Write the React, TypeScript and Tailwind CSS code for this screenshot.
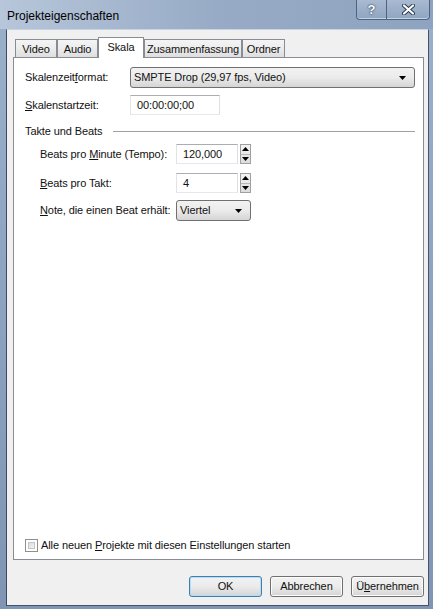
import React from 'react';

const tabs = [
  { label: 'Video', w: 'w-[42px]' },
  { label: 'Audio', w: 'w-[41px]' },
  { label: 'Skala', w: 'w-[46px]', active: true },
  { label: 'Zusammenfassung', w: 'w-[98px]' },
  { label: 'Ordner', w: 'w-[43px]' },
];

function Caret() {
  return (
    <svg width="7" height="4" viewBox="0 0 7 4" className="shrink-0">
      <path d="M0 0h7L3.5 4z" fill="#000" />
    </svg>
  );
}

function Combo({ text, className }: { text: string; className: string }) {
  return (
    <div
      className={`flex items-center justify-between h-[21px] pl-[3px] pr-[8px] rounded-[3px] border border-[#707070] bg-gradient-to-b from-[#f2f2f2] via-[#ebebeb] to-[#d5d5d5] ${className}`}
    >
      <span>{text}</span>
      <Caret />
    </div>
  );
}

function Spinner() {
  return (
    <div className="ml-[2px] flex flex-col w-[11px] h-[20px] border border-[#a0a0a0] bg-gradient-to-b from-[#f4f4f4] to-[#dcdcdc]">
      <div className="flex-1 flex items-center justify-center border-b border-[#b8b8b8]">
        <svg width="7" height="4" viewBox="0 0 7 4">
          <path d="M3.5 0L7 4H0z" fill="#000" />
        </svg>
      </div>
      <div className="flex-1 flex items-center justify-center">
        <svg width="7" height="4" viewBox="0 0 7 4">
          <path d="M0 0h7L3.5 4z" fill="#000" />
        </svg>
      </div>
    </div>
  );
}

function NumberField({ value }: { value: string }) {
  return (
    <div className="flex items-center">
      <div className="w-[62px] h-[20px] pl-[6px] flex items-center bg-white border border-[#abadb3] border-l-[#e2e3ea] border-r-[#dbdfe6] border-b-[#e3e9ef]">
        {value}
      </div>
      <Spinner />
    </div>
  );
}

function Btn({ children, primary }: { children: React.ReactNode; primary?: boolean }) {
  return (
    <button
      className={`w-[73px] h-[21px] rounded-[3px] border flex items-center justify-center bg-gradient-to-b from-[#f2f2f2] via-[#ebebeb] to-[#d4d4d4] ${
        primary ? 'border-[#3c7fb1] shadow-[inset_0_0_0_1px_#b8dcf5]' : 'border-[#707070] shadow-[inset_0_0_0_1px_#fcfcfc]'
      }`}
    >
      {children}
    </button>
  );
}

export default function App() {
  return (
    <div className="w-[433px] h-[609px] flex flex-col overflow-hidden whitespace-nowrap bg-gradient-to-b from-[#9bb0cb] to-[#7f95b3] font-['Liberation_Sans',Arial,sans-serif] text-[11px] tracking-[-0.1px] leading-none text-[#111]">
      {/* title bar */}
      <div className="h-[29px] shrink-0 flex items-start justify-between bg-gradient-to-r from-[#b7c6da] via-[#97abc6] to-[#8ea3bf]">
        <span className="pl-[7px] pt-[10px] text-[12px] tracking-normal text-black">Projekteigenschaften</span>
        <div className="flex mr-[3px]">
          <div className="w-[31px] h-[20px] flex items-center justify-center border border-t-0 border-[#4f6280] rounded-bl-[4px] bg-gradient-to-b from-[#a9bad1] to-[#90a5c2] shadow-[inset_0_-1px_0_#c5d2e3]">
            <span className="text-white font-bold text-[13px] [text-shadow:0_0_2px_#26364d,0_0_1px_#26364d]">?</span>
          </div>
          <div className="w-[43px] h-[20px] flex items-center justify-center border border-t-0 border-l-0 border-[#4f6280] rounded-br-[4px] bg-gradient-to-b from-[#a9bad1] to-[#90a5c2] shadow-[inset_0_-1px_0_#c5d2e3]">
            <svg width="13" height="11" viewBox="0 0 13 11">
              <path d="M2 1.5l9 8M11 1.5l-9 8" stroke="#26364d" strokeWidth="4" strokeLinecap="round" />
              <path d="M2 1.5l9 8M11 1.5l-9 8" stroke="#fff" strokeWidth="2.2" strokeLinecap="round" />
            </svg>
          </div>
        </div>
      </div>

      {/* client area */}
      <div className="flex-1 ml-[6px] mr-[4px] mb-[3px] border border-[#46536a] border-t-[#c9d3e0] border-l-[#3e4a5f] bg-[#f0f0f0] flex flex-col pl-[6px] pr-[4px] pt-[7px] pb-[8px]">
        {/* tabs */}
        <div className="h-[20px] flex items-end pl-[2px] relative z-10">
          {tabs.map((t) =>
            t.active ? (
              <div
                key={t.label}
                className={`${t.w} h-[21px] -mb-px pt-[4px] flex justify-center bg-white border border-b-0 border-[#898c95]`}
              >
                {t.label}
              </div>
            ) : (
              <div
                key={t.label}
                className={`${t.w} h-[18px] pt-[4px] flex justify-center border border-b-0 border-[#898c95] bg-gradient-to-b from-[#f4f4f4] via-[#ececec] to-[#dedede]`}
              >
                {t.label}
              </div>
            )
          )}
        </div>

        {/* tab page */}
        <div className="flex-1 flex flex-col bg-white border border-[#898c95] pl-[11px] pr-[8px] pt-[9px] pb-[7px]">
          <div className="flex items-center h-[21px]">
            <span className="w-[105px]">
              Skalenzeit<u>f</u>ormat:
            </span>
            <Combo text="SMPTE Drop (29,97 fps, Video)" className="w-[285px]" />
          </div>

          <div className="flex items-center h-[20px] mt-[7px]">
            <span className="w-[105px]">
              <u>S</u>kalenstartzeit:
            </span>
            <div className="w-[90px] h-[20px] pl-[6px] flex items-center bg-white border border-[#abadb3] border-l-[#e2e3ea] border-r-[#dbdfe6] border-b-[#e3e9ef]">
              00:00:00;00
            </div>
          </div>

          <div className="flex items-center h-[16px] mt-[8px]">
            <span>Takte und Beats</span>
            <div className="flex-1 ml-[11px] border-t border-[#a0a0a0]" />
          </div>

          <div className="pl-[15px] flex flex-col">
            <div className="flex items-center h-[20px] mt-[5px]">
              <span className="w-[136px]">
                Beats pro <u>M</u>inute (Tempo):
              </span>
              <NumberField value="120,000" />
            </div>
            <div className="flex items-center h-[20px] mt-[9px]">
              <span className="w-[136px]">
                <u>B</u>eats pro Takt:
              </span>
              <NumberField value="4" />
            </div>
            <div className="flex items-center h-[21px] mt-[7px]">
              <span className="w-[136px]">
                <u>N</u>ote, die einen Beat erhält:
              </span>
              <Combo text="Viertel" className="w-[75px]" />
            </div>
          </div>

          <div className="flex-1" />

          <label className="flex items-center gap-[3px] h-[13px]">
            <span className="w-[13px] h-[13px] border border-[#8f8f8f] p-[2px] bg-white">
              <span className="block w-full h-full border border-[#c4c4c4] bg-gradient-to-br from-[#dadada] to-[#f5f5f5]" />
            </span>
            <span>
              Alle neuen <u>P</u>rojekte mit diesen Einstellungen starten
            </span>
          </label>
        </div>

        {/* buttons */}
        <div className="flex justify-end gap-[8px] mt-[16px]">
          <Btn primary>OK</Btn>
          <Btn>Abbrechen</Btn>
          <Btn>
            Ü<u>b</u>ernehmen
          </Btn>
        </div>
      </div>
    </div>
  );
}
